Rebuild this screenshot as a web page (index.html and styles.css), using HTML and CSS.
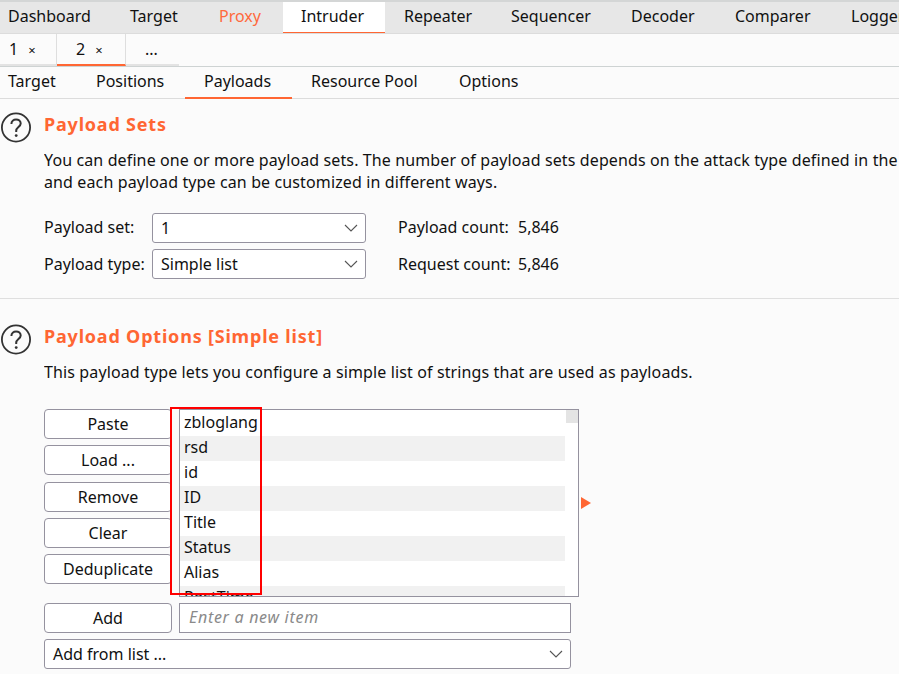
FILE: index.html
```html
<!DOCTYPE html>
<html lang="en">
<head>
<meta charset="utf-8">
<title>Burp Intruder Payloads</title>
<link rel="stylesheet" href="styles.css">
</head>
<body>
<div class="app">
  <nav class="main-tabs">
    <span class="mt t-dash">Dashboard</span>
    <span class="mt t-target">Target</span>
    <span class="mt t-proxy">Proxy</span>
    <span class="mt t-intr active">Intruder</span>
    <span class="mt t-rep">Repeater</span>
    <span class="mt t-seq">Sequencer</span>
    <span class="mt t-dec">Decoder</span>
    <span class="mt t-comp">Comparer</span>
    <span class="mt t-log">Logger</span>
  </nav>
  <div class="num-tabs">
    <span class="nt nt-1">1<i class="x">×</i></span>
    <span class="nt nt-2 active">2<i class="x">×</i></span>
    <span class="nt nt-3">...</span>
  </div>
  <nav class="sub-tabs">
    <span class="st s-target">Target</span>
    <span class="st s-pos">Positions</span>
    <span class="st s-pay active">Payloads</span>
    <span class="st s-res">Resource Pool</span>
    <span class="st s-opt">Options</span>
  </nav>
  <section class="sets">
    <div class="head">
      <svg class="help" width="32" height="32" viewBox="0 0 32 32"><circle cx="16" cy="15.5" r="14.1" fill="none" stroke="#333" stroke-width="1.8"/><path d="M11.4 12c0-2.9 2.1-4.6 4.7-4.6s4.6 1.7 4.6 4c0 3.5-4.5 3.8-4.5 7.4v1.2" fill="none" stroke="#333" stroke-width="2"/><circle cx="16.2" cy="23.6" r="1.4" fill="#333"/></svg>
      <h2>Payload Sets</h2>
    </div>
    <p class="desc">You can define one or more payload sets. The number of payload sets depends on the attack type defined in the Positions tab. Various payload types are available for each payload set,<br>and each payload type can be customized in different ways.</p>
    <div class="set-row first">
      <label class="lbl">Payload set:</label>
      <div class="select sel-sm"><span>1</span><svg class="chev" width="14" height="8" viewBox="0 0 14 8"><path d="M1 1l6 6 6-6" fill="none" stroke="#555" stroke-width="1.1"/></svg></div>
      <span class="count">Payload count:</span><span class="val">5,846</span>
    </div>
    <div class="set-row second">
      <label class="lbl">Payload type:</label>
      <div class="select sel-sm"><span>Simple list</span><svg class="chev" width="14" height="8" viewBox="0 0 14 8"><path d="M1 1l6 6 6-6" fill="none" stroke="#555" stroke-width="1.1"/></svg></div>
      <span class="count">Request count:</span><span class="val">5,846</span>
    </div>
  </section>
  <hr class="divider">
  <section class="options">
    <div class="head">
      <svg class="help" width="32" height="32" viewBox="0 0 32 32"><circle cx="16" cy="15.5" r="14.1" fill="none" stroke="#333" stroke-width="1.8"/><path d="M11.4 12c0-2.9 2.1-4.6 4.7-4.6s4.6 1.7 4.6 4c0 3.5-4.5 3.8-4.5 7.4v1.2" fill="none" stroke="#333" stroke-width="2"/><circle cx="16.2" cy="23.6" r="1.4" fill="#333"/></svg>
      <h2>Payload Options [Simple list]</h2>
    </div>
    <p class="desc one">This payload type lets you configure a simple list of strings that are used as payloads.</p>
    <div class="editor">
      <div class="btns">
        <button class="btn b1">Paste</button>
        <button class="btn b2">Load ...</button>
        <button class="btn b3">Remove</button>
        <button class="btn b4">Clear</button>
        <button class="btn b5">Deduplicate</button>
      </div>
      <div class="list">
        <div class="rows">
          <div class="row">zbloglang</div>
          <div class="row alt">rsd</div>
          <div class="row">id</div>
          <div class="row alt">ID</div>
          <div class="row">Title</div>
          <div class="row alt">Status</div>
          <div class="row">Alias</div>
          <div class="row alt">PostTime</div>
        </div>
        <div class="scroll"><div class="thumb"></div></div>
      </div>
      <svg class="arrow" width="10" height="12" viewBox="0 0 10 12"><path d="M0 0l10 6-10 6z" fill="#ff6633"/></svg>
      <div class="redbox"></div>
    </div>
    <div class="add-row">
      <button class="btn">Add</button>
      <div class="input">Enter a new item</div>
    </div>
    <div class="select sel-lg"><span>Add from list ...</span><svg class="chev" width="14" height="8" viewBox="0 0 14 8"><path d="M1 1l6 6 6-6" fill="none" stroke="#555" stroke-width="1.1"/></svg></div>
  </section>
</div>
</body>
</html>
```
FILE: styles.css
```css
* { box-sizing: border-box; }
html, body { margin: 0; padding: 0; height: 100%; overflow: hidden; }
body {
  width: 899px;
  height: 674px;
  background: #fbfbfb;
  color: #111;
  font-family: "Noto Sans", "Open Sans", sans-serif;
  font-size: 16px;
  line-height: 22px;
}
.app { width: 899px; height: 674px; overflow: hidden; }

.main-tabs {
  display: flex;
  height: 34px;
  background: #e7e7e7;
  border-top: 2px solid #d4d6d6;
  border-bottom: 1px solid #dcdcdc;
  white-space: nowrap;
  overflow: hidden;
}
.mt { display: block; height: 32px; padding: 3px 0 0; flex: none; }
.t-dash { width: 111px; padding-left: 8px; }
.t-target { width: 89px; padding-left: 19px; }
.t-proxy { width: 83px; padding-left: 19px; color: #ff6a3d; }
.t-intr { width: 102px; padding-left: 18px; }
.t-rep { width: 107px; padding-left: 19px; }
.t-seq { width: 120px; padding-left: 19px; }
.t-dec { width: 104px; padding-left: 19px; }
.t-comp { width: 116px; padding-left: 19px; }
.t-log { width: 90px; padding-left: 19px; }
.mt.active { background: #fff; border-bottom: 2px solid #ff6633; height: 32px; }

.num-tabs {
  display: flex;
  height: 33px;
  border-bottom: 1px solid #ced3d3;
  white-space: nowrap;
}
.nt { display: block; height: 32px; padding: 4px 0 0; flex: none; border-bottom: 2px solid #e3e3e3; }
.nt-1 { width: 57px; padding-left: 9px; border-right: 1px solid #dedede; }
.nt-2 { width: 69px; padding-left: 19px; border-right: 1px solid #dedede; }
.nt-3 { width: 53px; padding-left: 19px; }
.nt.active { border-bottom-color: #ff6633; }
.x { font-style: normal; font-size: 13px; margin-left: 10px; }

.sub-tabs {
  display: flex;
  height: 32px;
  border-bottom: 1px solid #dcdcdc;
  white-space: nowrap;
}
.st { display: block; height: 32px; padding: 3px 0 0; flex: none; }
.s-target { width: 77px; padding-left: 8px; }
.s-pos { width: 108px; padding-left: 19px; }
.s-pay { width: 107px; padding-left: 19px; }
.s-res { width: 148px; padding-left: 19px; }
.s-opt { width: 100px; padding-left: 19px; }
.st.active { border-bottom: 2px solid #ff6633; }

.head { display: flex; align-items: flex-start; height: 32px; }
.help { flex: none; margin-right: 12px; }
h2 { margin: 0; font-size: 18px; font-weight: 700; color: #ff6633; letter-spacing: 0.8px; line-height: 24px; }

.sets { padding-top: 13px; }
.desc { margin: 0 0 0 44px; line-height: 22px; letter-spacing: 0.12px; white-space: nowrap; overflow: hidden; }
.sets .desc { margin-top: 5px; }
.set-row { display: flex; align-items: center; height: 30px; margin: 6px 0 0 44px; white-space: nowrap; }
.set-row.first { margin-top: 20px; }
.lbl { width: 108px; flex: none; padding-bottom: 2px; }
.count { margin-left: 32px; width: 120px; flex: none; padding-bottom: 2px; }
.val { flex: none; padding-bottom: 2px; }
.second .lbl, .second .count, .second .val { padding-bottom: 0; }
.select {
  display: flex;
  align-items: center;
  justify-content: space-between;
  height: 30px;
  padding: 0 7px 0 8px;
  background: #fff;
  border: 1px solid #95929f;
  border-radius: 3px;
  flex: none;
}
.sel-sm { width: 214px; }
.sel-lg { width: 527px; margin-left: 44px; margin-top: 6px; }

.divider { height: 1px; margin: 19px 0 0; border: 0; background: #dfdfdf; }
.options { padding-top: 25px; }
.options .desc.one { margin-top: 5px; }

.editor { position: relative; display: flex; margin: 26px 0 0 44px; height: 188px; }
.btns { width: 135px; flex: none; display: flex; flex-direction: column; }
.btn {
  display: block;
  width: 128px;
  height: 30px;
  padding: 0;
  background: #fff;
  border: 1px solid #95929f;
  border-radius: 4px;
  font: inherit;
  color: #111;
  line-height: 26px;
  flex: none;
}
.btns .btn { margin-bottom: 6px; }
.btns .b3 { margin-top: 1px; }
.list {
  display: flex;
  width: 400px;
  height: 188px;
  flex: none;
  background: #fff;
  border: 1px solid #95929f;
  overflow: hidden;
}
.rows { width: 385px; flex: none; padding-top: 1px; }
.row { height: 25px; padding-left: 4px; line-height: 23px; background: #fff; overflow: hidden; }
.row.alt { background: #f1f1f1; }
.scroll { flex: 1; padding: 0 1px; }
.thumb { width: 12px; height: 13px; background: #e4e4e4; }
.arrow { position: absolute; left: 537px; top: 88px; }
.redbox {
  position: absolute;
  left: 126px;
  top: -2px;
  width: 92px;
  height: 188px;
  border: 2px solid #f00;
  pointer-events: none;
}

.add-row { display: flex; margin: 6px 0 0 44px; }
.add-row .btn { margin-right: 7px; }
.input {
  width: 392px;
  height: 30px;
  padding: 2px 0 0 9px;
  background: #fff;
  border: 1px solid #95929f;
  color: #8a8a8a;
  font-style: italic;
  letter-spacing: 0.7px;
}
```
